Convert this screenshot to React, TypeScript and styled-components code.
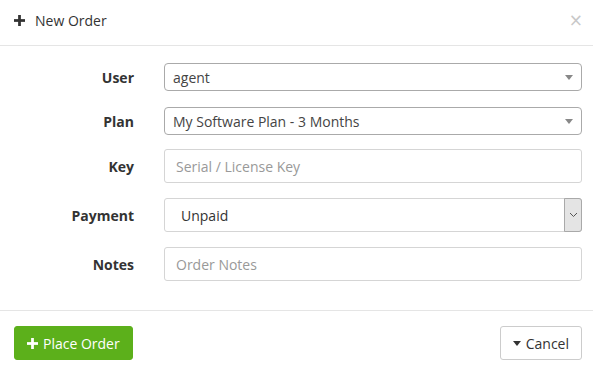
import React, { useState } from "react";
import styled, { createGlobalStyle } from "styled-components";

const GlobalStyle = createGlobalStyle`
  html, body {
    margin: 0;
    padding: 0;
    background: #fff;
  }
  body {
    font-family: "Open Sans", "Noto Sans", sans-serif;
    color: #393939;
  }
`;

const Modal = styled.div`
  width: 593px;
  height: 375px;
  display: flex;
  flex-direction: column;
  background: #fff;
`;

const Header = styled.div`
  height: 46px;
  display: flex;
  align-items: center;
  justify-content: space-between;
  padding: 0 10px 4px 14px;
  border-bottom: 1px solid #e5e5e5;
  box-sizing: border-box;
`;

const Title = styled.div`
  display: flex;
  align-items: center;
  gap: 10px;
  font-size: 14px;
  color: #333;
`;

const CloseButton = styled.button`
  border: none;
  background: none;
  padding: 0;
  color: #c8c8c8;
  font-size: 17px;
  line-height: 1;
  cursor: pointer;
  font-family: "DejaVu Sans", sans-serif;
`;

const Body = styled.div`
  flex: 1;
  padding: 17px 11px 0 0;
  display: flex;
  flex-direction: column;
`;

const Row = styled.div<{ mb: number }>`
  display: grid;
  grid-template-columns: 134px 1fr;
  column-gap: 30px;
  align-items: center;
  margin-bottom: ${(p) => p.mb}px;
`;

const Label = styled.label`
  text-align: right;
  font-weight: 700;
  font-size: 14px;
  color: #333;
`;

const Combo = styled.div`
  height: 28px;
  box-sizing: border-box;
  border: 1px solid #aaa;
  border-radius: 4px;
  display: flex;
  align-items: center;
  justify-content: space-between;
  padding: 0 8px 0 8px;
  font-size: 14px;
  color: #444;
  background: #fff;
`;

const Caret = styled.span<{ color?: string }>`
  width: 0;
  height: 0;
  border-left: 4px solid transparent;
  border-right: 4px solid transparent;
  border-top: 5px solid ${(p) => p.color || "#888"};
`;

const TextInput = styled.input`
  height: 34px;
  box-sizing: border-box;
  width: 100%;
  border: 1px solid #d5d5d5;
  border-radius: 3px;
  padding: 0 11px;
  font-family: "Open Sans", "Noto Sans", sans-serif;
  font-size: 14px;
  color: #333;
  outline: none;
  &::placeholder {
    color: #999;
  }
`;

const SelectBox = styled.div`
  height: 34px;
  box-sizing: border-box;
  border: 1px solid #d5d5d5;
  border-radius: 3px;
  display: flex;
  align-items: stretch;
  font-size: 14px;
  color: #333;
`;

const SelectText = styled.span`
  flex: 1;
  display: flex;
  align-items: center;
  padding-left: 16px;
`;

const SelectArrow = styled.span`
  width: 16px;
  display: flex;
  align-items: center;
  justify-content: center;
  background: #e4e4e4;
  border-radius: 0 3px 3px 0;
  margin: -1px -1px -1px 0;
  border: 1px solid #a9a9a9;
`;

const Footer = styled.div`
  height: 65px;
  border-top: 1px solid #e5e5e5;
  display: flex;
  align-items: flex-start;
  justify-content: space-between;
  padding: 15px 11px 0 14px;
  box-sizing: border-box;
`;

const Button = styled.button<{ variant: "success" | "default" }>`
  height: 34px;
  display: flex;
  align-items: center;
  gap: 5px;
  padding: 0 12px;
  border-radius: 3px;
  font-family: "Open Sans", "Noto Sans", sans-serif;
  font-size: 14px;
  cursor: pointer;
  background: ${(p) => (p.variant === "success" ? "#5cb01b" : "#fff")};
  color: ${(p) => (p.variant === "success" ? "#fff" : "#333")};
  border: 1px solid ${(p) => (p.variant === "success" ? "#5cb01b" : "#ccc")};
`;

const PlusIcon = ({ color, size }: { color: string; size: number }) => (
  <svg width={size} height={size} viewBox="0 0 12 12">
    <rect x="4.5" y="0" width="3" height="12" fill={color} />
    <rect x="0" y="4.5" width="12" height="3" fill={color} />
  </svg>
);

const App: React.FC = () => {
  const [key, setKey] = useState("");
  const [notes, setNotes] = useState("");

  return (
    <Modal>
      <GlobalStyle />
      <Header>
        <Title>
          <PlusIcon color="#333" size={11} />
          New Order
        </Title>
        <CloseButton>×</CloseButton>
      </Header>
      <Body>
        <Row mb={16}>
          <Label>User</Label>
          <Combo>
            agent
            <Caret />
          </Combo>
        </Row>
        <Row mb={14}>
          <Label>Plan</Label>
          <Combo>
            My Software Plan - 3 Months
            <Caret />
          </Combo>
        </Row>
        <Row mb={15}>
          <Label>Key</Label>
          <TextInput
            placeholder="Serial / License Key"
            value={key}
            onChange={(e) => setKey(e.target.value)}
          />
        </Row>
        <Row mb={15}>
          <Label>Payment</Label>
          <SelectBox>
            <SelectText>Unpaid</SelectText>
            <SelectArrow>
              <svg width="9" height="6" viewBox="0 0 9 6">
                <path d="M1 1 L4.5 4.5 L8 1" fill="none" stroke="#555" strokeWidth="1" />
              </svg>
            </SelectArrow>
          </SelectBox>
        </Row>
        <Row mb={0}>
          <Label>Notes</Label>
          <TextInput
            placeholder="Order Notes"
            value={notes}
            onChange={(e) => setNotes(e.target.value)}
          />
        </Row>
      </Body>
      <Footer>
        <Button variant="success">
          <PlusIcon color="#fff" size={11} />
          Place Order
        </Button>
        <Button variant="default">
          <Caret color="#333" />
          Cancel
        </Button>
      </Footer>
    </Modal>
  );
};

export default App;
